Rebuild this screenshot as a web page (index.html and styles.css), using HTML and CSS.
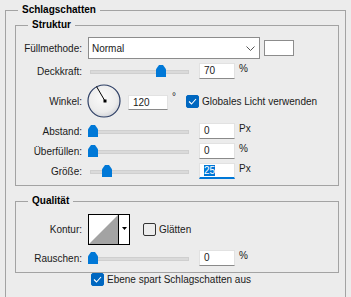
FILE: index.html
```html
<!DOCTYPE html>
<html lang="de">

<head>
  <meta charset="UTF-8" />
  <meta name="viewport" content="width=device-width, initial-scale=1.0" />
  <title>Schlagschatten</title>
  <link rel="stylesheet" href="styles.css">
</head>

<body>
  <fieldset class="group outer">
    <legend>Schlagschatten</legend>

    <fieldset class="group struktur">
      <legend>Struktur</legend>

      <div class="row row-blend">
        <span class="label">Füllmethode:</span>
        <div class="select">
          Normal
          <svg class="chevron" width="9" height="5" viewBox="0 0 9 5">
            <polyline points="0.5,0.5 4.5,4.5 8.5,0.5" fill="none" stroke="#555" stroke-width="1" />
          </svg>
        </div>
        <div class="swatch"></div>
      </div>

      <div class="row">
        <span class="label">Deckkraft:</span>
        <div class="slider"><span class="thumb" style="left: 68px"></span></div>
        <span class="field">70</span>
        <span class="unit">%</span>
      </div>

      <div class="row row-angle">
        <span class="label">Winkel:</span>
        <svg class="dial" width="34" height="34" viewBox="0 0 34 34">
          <defs>
            <radialGradient id="dialFill" cx="0.45" cy="0.4" r="0.6">
              <stop offset="0" stop-color="#fafafa" />
              <stop offset="0.75" stop-color="#ececec" />
              <stop offset="1" stop-color="#d4d6da" />
            </radialGradient>
          </defs>
          <circle cx="17" cy="17" r="16" fill="url(#dialFill)" stroke="#2f4066" stroke-width="1.2" />
          <line x1="18" y1="17" x2="9.5" y2="2.5" stroke="#000" stroke-width="1" />
          <rect x="16.5" y="15.5" width="3" height="3" fill="#000" />
        </svg>
        <span class="field field-wide">120</span>
        <span class="unit deg">°</span>
        <span class="check checked">
          <svg width="9" height="7" viewBox="0 0 9 7">
            <polyline points="1,3.5 3.5,6 8,1" fill="none" stroke="#fff" stroke-width="1.1" />
          </svg>
        </span>
        <span class="check-label">Globales Licht verwenden</span>
      </div>

      <div class="row row-small">
        <span class="label">Abstand:</span>
        <div class="slider"><span class="thumb" style="left: 0px"></span></div>
        <span class="field">0</span>
        <span class="unit">Px</span>
      </div>

      <div class="row row-small">
        <span class="label">Überfüllen:</span>
        <div class="slider"><span class="thumb" style="left: 0px"></span></div>
        <span class="field">0</span>
        <span class="unit">%</span>
      </div>

      <div class="row row-small">
        <span class="label">Größe:</span>
        <div class="slider"><span class="thumb" style="left: 14px"></span></div>
        <span class="field focused"><span class="selection">25</span></span>
        <span class="unit">Px</span>
      </div>
    </fieldset>

    <fieldset class="group qualitaet">
      <legend>Qualität</legend>

      <div class="row row-contour">
        <span class="label">Kontur:</span>
        <div class="contour">
          <svg class="contour-preview" width="29" height="29" viewBox="0 0 29 29">
            <rect width="29" height="29" fill="#fff" />
            <polygon points="0,29 29,0 29,29" fill="#a3a3a3" />
          </svg>
          <span class="contour-arrow">
            <svg width="5" height="3" viewBox="0 0 5 3">
              <polygon points="0,0 5,0 2.5,3" fill="#000" />
            </svg>
          </span>
        </div>
        <span class="check"></span>
        <span class="check-label">Glätten</span>
      </div>

      <div class="row row-noise">
        <span class="label">Rauschen:</span>
        <div class="slider"><span class="thumb" style="left: 0px"></span></div>
        <span class="field">0</span>
        <span class="unit">%</span>
      </div>
    </fieldset>

    <div class="row row-knockout">
      <span class="check checked">
        <svg width="9" height="7" viewBox="0 0 9 7">
          <polyline points="1,3.5 3.5,6 8,1" fill="none" stroke="#fff" stroke-width="1.1" />
        </svg>
      </span>
      <span class="check-label">Ebene spart Schlagschatten aus</span>
    </div>
  </fieldset>
</body>

</html>
```

FILE: styles.css
```css
body {
  margin: 0;
  width: 351px;
  height: 297px;
  overflow: hidden;
  font-family: "Liberation Sans", Arial, sans-serif;
  font-size: 10px;
  color: #1a1a1a;
  background-color: #ececec;
}

.group {
  border: 1px solid #a3a3a3;
  margin: 0;
  min-width: 0;
}

.group legend {
  font-weight: bold;
  color: #000;
  line-height: 14px;
  padding: 0 4px;
}

.outer {
  margin: 3px 5px 0 5px;
  padding: 0 6px 0 9px;
  height: 300px;
  box-sizing: border-box;
}

.outer > legend {
  margin-left: 3px;
}

.struktur {
  margin-top: 1px;
  padding: 5px 0 6px 0;
}

.struktur legend,
.qualitaet legend {
  margin-left: 12px;
}

.qualitaet {
  margin-top: 8px;
  padding: 6px 0 6px 0;
}

.row {
  display: flex;
  align-items: center;
  height: 16px;
  margin-top: 4px;
}

.row:first-of-type {
  margin-top: 0;
}

.label {
  width: 66px;
  margin-right: 6px;
  text-align: right;
  white-space: nowrap;
}

/* Füllmethode */
.row-blend {
  height: 22px;
}

.select {
  display: flex;
  align-items: center;
  justify-content: space-between;
  width: 172px;
  height: 22px;
  padding: 0 4px 0 3px;
  box-sizing: border-box;
  border: 1px solid #8c8c8c;
  background-color: #fff;
}

.chevron {
  margin-top: 1px;
}

.swatch {
  width: 30px;
  height: 16px;
  margin-left: 4px;
  border: 1px solid #8c8c8c;
  background-color: #fff;
  box-sizing: border-box;
}

/* slider */
.slider {
  position: relative;
  width: 101px;
  height: 12px;
}

.slider::before {
  content: "";
  position: absolute;
  left: 2px;
  right: 0;
  top: 5px;
  height: 4px;
  background-color: #dadada;
  border: 1px solid #cfcfcf;
  box-sizing: border-box;
}

.thumb {
  position: absolute;
  top: 0;
  width: 10px;
  height: 12px;
  background-color: #0078d7;
  clip-path: polygon(0 35%, 30% 0, 70% 0, 100% 35%, 100% 100%, 0 100%);
}

.field {
  width: 36px;
  height: 16px;
  margin-left: 10px;
  padding-left: 4px;
  box-sizing: border-box;
  background-color: #fff;
  border: 1px solid #e2e2e2;
  border-bottom-color: #8a8a8a;
  line-height: 14px;
}

.field.focused {
  border-bottom: 2px solid #0078d7;
}

.selection {
  background-color: #0078d7;
  color: #fff;
}

.unit {
  margin-left: 4px;
  align-self: flex-start;
  line-height: 12px;
}

/* Winkel */
.row-angle {
  height: 34px;
  margin-top: 5px;
}

.dial {
  margin-left: -1px;
}

.field-wide {
  width: 40px;
  height: 15px;
  margin-left: 7px;
  margin-top: 2px;
}

.deg {
  align-self: center;
  margin-top: -8px;
}

.check {
  width: 13px;
  height: 13px;
  margin-left: 10px;
  margin-right: 3px;
  border: 1px solid #333;
  border-radius: 2px;
  box-sizing: border-box;
  display: flex;
  align-items: center;
  justify-content: center;
}

.check.checked {
  background-color: #0067c0;
  border-color: #0067c0;
}

.row-small {
  margin-top: 4px;
}

.row-angle + .row-small {
  margin-top: 5px;
}

/* Qualität */
.row-contour {
  height: 31px;
}

.contour {
  display: flex;
  width: 42px;
  height: 31px;
  border: 1px solid #000;
  box-sizing: border-box;
  background-color: #fff;
}

.contour-preview {
  border-right: 1px solid #000;
}

.contour-arrow {
  flex: 1;
  display: flex;
  justify-content: center;
  padding-top: 12px;
}

.row-contour .check {
  margin-left: 13px;
}

.row-noise {
  margin-top: 5px;
}

.row-knockout {
  height: 13px;
  margin-top: 7px;
  padding-left: 66px;
}
```
